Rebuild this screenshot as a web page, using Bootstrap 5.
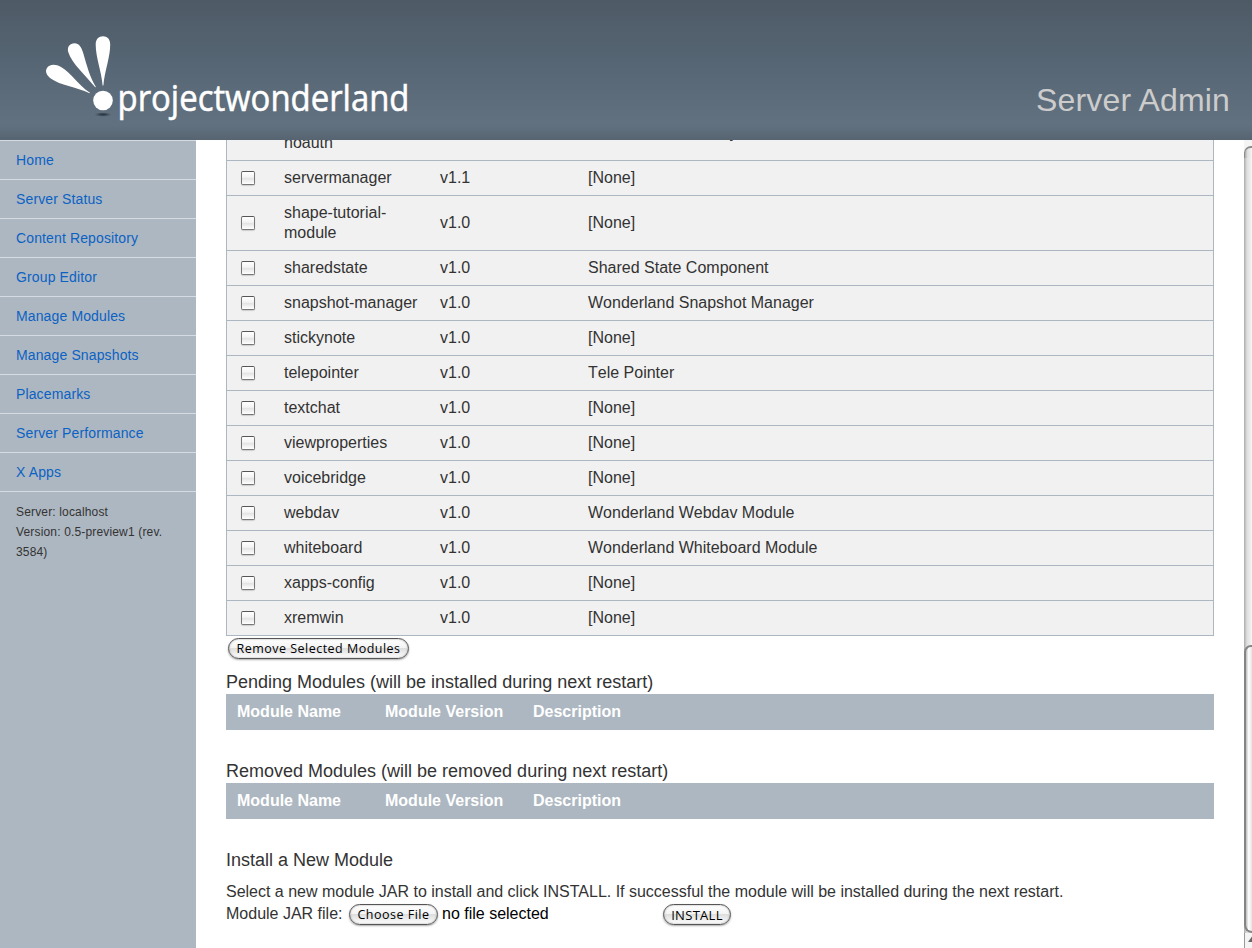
<!DOCTYPE html>
<html lang="en">
<head>
<meta charset="utf-8">
<meta name="viewport" content="width=device-width, initial-scale=1">
<title>Project Wonderland - Server Admin</title>
<link href="https://cdn.jsdelivr.net/npm/bootstrap@5.3.0/dist/css/bootstrap.min.css" rel="stylesheet">
<style>
body{font-family:"Liberation Sans",Arial,sans-serif;font-size:16px;line-height:20px;color:#333;background:#fff}
.top-banner{height:140px;background:linear-gradient(#4e5a66 0,#566573 60px,#62717f 124px,#5f6e7c 130px,#576472 139px)}
.logo{display:block;margin-left:40px}
.site-title{font-size:32px;line-height:40px;color:#ccc;margin:0 22px 20px 0;letter-spacing:.15px}
.side{width:196px;background:#adb7c1;flex:none}
.side .nav-link{height:39px;padding:0 16px;border-top:1px solid #d5dbe1;color:#0b62c4;font-size:14px;line-height:39px;letter-spacing:.13px}
.side-info{border-top:1px solid #d5dbe1;padding:10px 16px;font-size:12px;letter-spacing:.16px}
.content-area{padding:0 30px 0 30px}
.modules{width:988px;margin:-35px 0 0;border-collapse:collapse;table-layout:fixed;border:1px solid #adb7c1;background:#f1f1f1;font-kerning:none}
.modules td{height:35px;padding:7px 10px 7px 10.5px;border-bottom:1px solid #adb7c1;line-height:20px;vertical-align:middle}
.modules td:first-child{padding-left:14px}
.modules tr{height:35px}
.modules tr.tall,.modules tr.tall td{height:55px}
.modules td.clipped{padding-left:152px}
.tick{display:block;appearance:none;width:14px;height:14px;margin:0;border:1px solid #777;border-top-color:#555;border-radius:2px;background:linear-gradient(#fff 0,#f3f3f3 45%,#e2e2e2 50%,#fff);box-shadow:0 1px 1px #ccc}
.aqua{height:21px;border:1px solid #555;border-radius:11px;background:linear-gradient(#fff 0,#f4f4f4 45%,#dedede 50%,#fff 100%);box-shadow:0 1px 2px #aaa,inset 0 0 2px #999;color:#000;font:500 12.5px/18px "Open Sans","Noto Sans",sans-serif;padding:0;white-space:nowrap}
.heading{font-size:18px;line-height:24px;font-weight:400;margin:0}
.heads{height:36px;padding:0 11px;background:#adb7c1;color:#fff;font-weight:700;line-height:36px}
.heads span{width:148px}
.bar{width:8px;flex:none;background:linear-gradient(90deg,#aaa,#ddd 35%,#f6f6f6)}
.groove-cap{height:12px;border-top:6px solid #f4f4f4;background:#f4f4f4}
.groove-cap div{height:12px;border:solid #8a8a8a;border-width:2px 0 0 1px;border-radius:7px 0 0 0;background:linear-gradient(90deg,#aaa,#ddd 35%,#f6f6f6)}
.thumb{margin-top:493px;height:288px;border:2px solid #858585;border-right:0;border-radius:7px 0 0 8px;background:linear-gradient(90deg,#bbb,#fff 45%,#e5e5e5)}
.arrow-cell{height:15px;border-left:1px solid #999;background:#f4f4f4}
</style>
</head>
<body class="vh-100 overflow-hidden d-flex flex-column">
<header class="top-banner flex-shrink-0 d-flex justify-content-between align-items-end">
<svg class="logo" width="380" height="140" viewBox="40 0 380 140" role="img" aria-label="projectwonderland">
<defs><radialGradient id="sh"><stop offset="0" stop-color="#2a3643"/><stop offset=".4" stop-color="#364350"/><stop offset="1" stop-color="#4d5a67" stop-opacity="0"/></radialGradient></defs>
<g fill="#fff">
<path d="M102.600 85.500C101.500 71 95.700 58 95.700 44.500C95.700 39 98.800 36.200 103 36.200C107.200 36.200 110.200 39 110.200 44.500C110.200 58 104.500 71 103.400 85.500Z"/>
<path d="M95.200 87.300C86 76 71.500 63 68.400 52.500C66.600 47 70 43.300 74.500 43.300C79 43.300 81.500 47 83.500 54C87 66 89.500 76 95.900 87Z"/>
<path d="M89.600 93.200C76 87 60 85 51.500 79C46.500 75.500 45 71.500 46.700 68.500C49 64.300 55 63.500 61 67C71.500 73 78 85 90 92.700Z"/>
<circle cx="103" cy="100.500" r="9.800"/>
<text x="117.500" y="111" font-family="Open Sans, Noto Sans, sans-serif" font-size="36" stroke="#fff" stroke-width=".55" textLength="292" lengthAdjust="spacingAndGlyphs">projectwonderland</text>
</g>
<ellipse cx="103" cy="114.500" rx="9" ry="2.300" fill="url(#sh)"/>
</svg>
<h1 class="site-title fw-normal">Server Admin</h1>
</header>
<div class="d-flex flex-grow-1 overflow-hidden">
<nav class="side">
<div class="nav flex-column">
<a class="nav-link" href="#">Home</a><a class="nav-link" href="#">Server Status</a><a class="nav-link" href="#">Content Repository</a><a class="nav-link" href="#">Group Editor</a><a class="nav-link" href="#">Manage Modules</a><a class="nav-link" href="#">Manage Snapshots</a><a class="nav-link" href="#">Placemarks</a><a class="nav-link" href="#">Server Performance</a><a class="nav-link" href="#">X Apps</a>
</div>
<div class="side-info">Server: localhost<br>Version: 0.5-preview1 (rev. 3584)</div>
</nav>
<main class="content-area flex-grow-1 overflow-hidden">
<table class="modules">
<colgroup><col style="width:47px"><col style="width:156px"><col style="width:148px"><col></colgroup>
<tbody>
<tr class="tall"><td></td><td><br>noauth</td><td></td><td class="clipped">y</td></tr>
<tr><td><input class="tick" type="checkbox"></td><td>servermanager</td><td>v1.1</td><td>[None]</td></tr>
<tr class="tall"><td><input class="tick" type="checkbox"></td><td>shape-tutorial-<br>module</td><td>v1.0</td><td>[None]</td></tr>
<tr><td><input class="tick" type="checkbox"></td><td>sharedstate</td><td>v1.0</td><td>Shared State Component</td></tr>
<tr><td><input class="tick" type="checkbox"></td><td>snapshot-manager</td><td>v1.0</td><td>Wonderland Snapshot Manager</td></tr>
<tr><td><input class="tick" type="checkbox"></td><td>stickynote</td><td>v1.0</td><td>[None]</td></tr>
<tr><td><input class="tick" type="checkbox"></td><td>telepointer</td><td>v1.0</td><td>Tele Pointer</td></tr>
<tr><td><input class="tick" type="checkbox"></td><td>textchat</td><td>v1.0</td><td>[None]</td></tr>
<tr><td><input class="tick" type="checkbox"></td><td>viewproperties</td><td>v1.0</td><td>[None]</td></tr>
<tr><td><input class="tick" type="checkbox"></td><td>voicebridge</td><td>v1.0</td><td>[None]</td></tr>
<tr><td><input class="tick" type="checkbox"></td><td>webdav</td><td>v1.0</td><td>Wonderland Webdav Module</td></tr>
<tr><td><input class="tick" type="checkbox"></td><td>whiteboard</td><td>v1.0</td><td>Wonderland Whiteboard Module</td></tr>
<tr><td><input class="tick" type="checkbox"></td><td>xapps-config</td><td>v1.0</td><td>[None]</td></tr>
<tr><td><input class="tick" type="checkbox"></td><td>xremwin</td><td>v1.0</td><td>[None]</td></tr>
</tbody>
</table>
<button class="aqua d-block" style="width:181px;margin:2px 0 11px 2px;letter-spacing:.48px">Remove Selected Modules</button>
<h2 class="heading">Pending Modules (will be installed during next restart)</h2>
<div class="heads d-flex"><span>Module Name</span><span>Module Version</span><span>Description</span></div>
<h2 class="heading" style="margin-top:29px">Removed Modules (will be removed during next restart)</h2>
<div class="heads d-flex"><span>Module Name</span><span>Module Version</span><span>Description</span></div>
<h2 class="heading" style="margin-top:29px">Install a New Module</h2>
<div style="margin-top:10px;line-height:20px;letter-spacing:-.008px">Select a new module JAR to install and click INSTALL. If successful the module will be installed during the next restart.</div>
<div class="d-flex" style="margin-top:2px"><span style="width:123px">Module JAR file:</span><button class="aqua" style="width:89px;letter-spacing:.5px">Choose File</button><span class="text-black" style="width:225px;padding-left:4px">no file selected</span><button class="aqua" style="width:68px;font-size:13px;letter-spacing:.3px">INSTALL</button></div>
</main>
<div class="bar"><div class="groove-cap"><div></div></div><div class="thumb"></div>
<div class="arrow-cell"><svg class="d-block" width="7" height="15" viewBox="0 0 7 15"><path d="M3 9 8 2v7Z" fill="#666"/></svg></div></div>
</div>
<script src="https://cdn.jsdelivr.net/npm/bootstrap@5.3.0/dist/js/bootstrap.bundle.min.js"></script>
</body>
</html>
